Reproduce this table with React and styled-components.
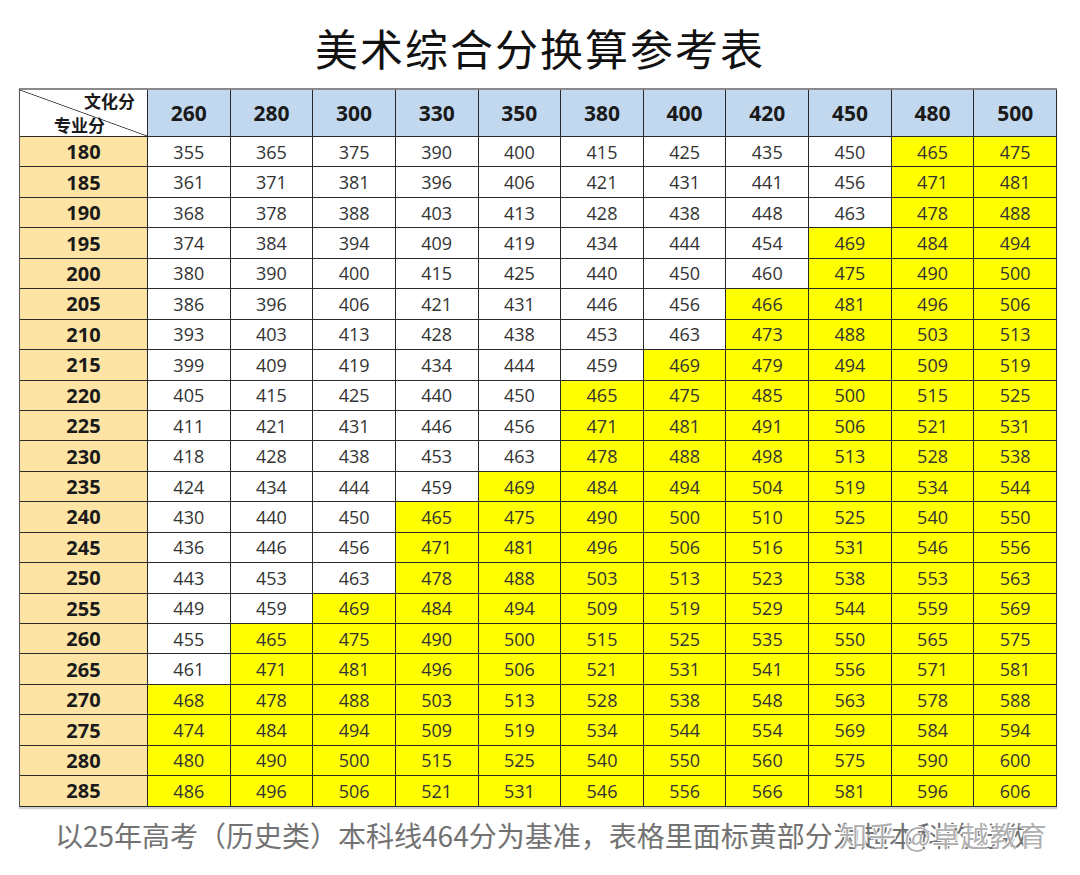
import React from 'react';
import styled, { createGlobalStyle } from 'styled-components';

const GlobalStyle = createGlobalStyle`
  body {
    margin: 0;
    background: #ffffff;
    font-family: "Noto Sans CJK SC", "Noto Sans", sans-serif;
  }
`;

const Page = styled.div`
  width: 1080px;
  height: 875px;
  background: #ffffff;
  display: flex;
  flex-direction: column;
  overflow: hidden;
`;

const Title = styled.h1`
  margin: 0;
  height: 88px;
  display: flex;
  align-items: center;
  justify-content: center;
  padding-top: 6px;
  box-sizing: border-box;
  font-size: 43px;
  font-weight: 400;
  color: #111;
  letter-spacing: 2px;
`;

const Grid = styled.div`
  margin-left: 19px;
  width: 1037px;
  display: grid;
  grid-template-columns: 128px repeat(11, 1fr);
  grid-template-rows: 47px repeat(22, 30.45px);
  border-top: 2px solid #8a8a8a;
  border-left: 1px solid #555;
  box-shadow: 0 2px 1px rgba(0, 0, 0, 0.18);
`;

const Cell = styled.div`
  border-right: 1px solid #2a2a2a;
  border-bottom: 1px solid #2a2a2a;
  display: flex;
  align-items: center;
  justify-content: center;
  font-family: "Open Sans", "Noto Sans", sans-serif;
  font-size: 18px;
  color: #333;
  background: ${p => (p.$hot ? '#ffff00' : '#ffffff')};
`;

const HeadCell = styled(Cell)`
  background: #c2d8ee;
  font-size: 21px;
  font-weight: 700;
  color: #1a1a1a;
`;

const RowHead = styled(Cell)`
  background: #fde4a4;
  font-size: 20px;
  font-weight: 700;
  color: #1a1a1a;
`;

const Corner = styled.div`
  border-right: 1px solid #2a2a2a;
  border-bottom: 1px solid #2a2a2a;
  background: linear-gradient(to top right, #fff calc(50% - 0.8px), #333 50%, #fff calc(50% + 0.8px));
  display: flex;
  flex-direction: column;
  justify-content: space-between;
  padding: 0 12px 0 34px;
  font-size: 17px;
  font-weight: 700;
  color: #1a1a1a;
  line-height: 22px;
`;

const CornerTop = styled.span`
  align-self: flex-end;
`;

const CornerBottom = styled.span`
  align-self: flex-start;
`;

const Footer = styled.div`
  position: relative;
  margin: 8px 0 0 55px;
  font-size: 28px;
  color: #727272;
  white-space: nowrap;
  line-height: 40px;
`;

const Watermark = styled.span`
  position: absolute;
  left: 784px;
  top: 0;
  color: rgba(150, 150, 150, 0.75);
  text-shadow: 1px 1px 0 #fff, -1px -1px 0 #fff;
  letter-spacing: 1px;
`;

const cols = [260, 280, 300, 330, 350, 380, 400, 420, 450, 480, 500];
const rows = [180, 185, 190, 195, 200, 205, 210, 215, 220, 225, 230, 235, 240, 245, 250, 255, 260, 265, 270, 275, 280, 285];
const score = (pro, cul) => Math.round(pro * 1.25 + cul * 0.5);

export default function App() {
  return (
    <Page>
      <GlobalStyle />
      <Title>美术综合分换算参考表</Title>
      <Grid>
        <Corner>
          <CornerTop>文化分</CornerTop>
          <CornerBottom>专业分</CornerBottom>
        </Corner>
        {cols.map(c => (
          <HeadCell key={c}>{c}</HeadCell>
        ))}
        {rows.map(r => (
          <React.Fragment key={r}>
            <RowHead>{r}</RowHead>
            {cols.map(c => {
              const v = score(r, c);
              return (
                <Cell key={c} $hot={v >= 464}>
                  {v}
                </Cell>
              );
            })}
          </React.Fragment>
        ))}
      </Grid>
      <Footer>
        以25年高考（历史类）本科线464分为基准，表格里面标黄部分为超本科的分数
        <Watermark>知乎 @卓越教育</Watermark>
      </Footer>
    </Page>
  );
}
